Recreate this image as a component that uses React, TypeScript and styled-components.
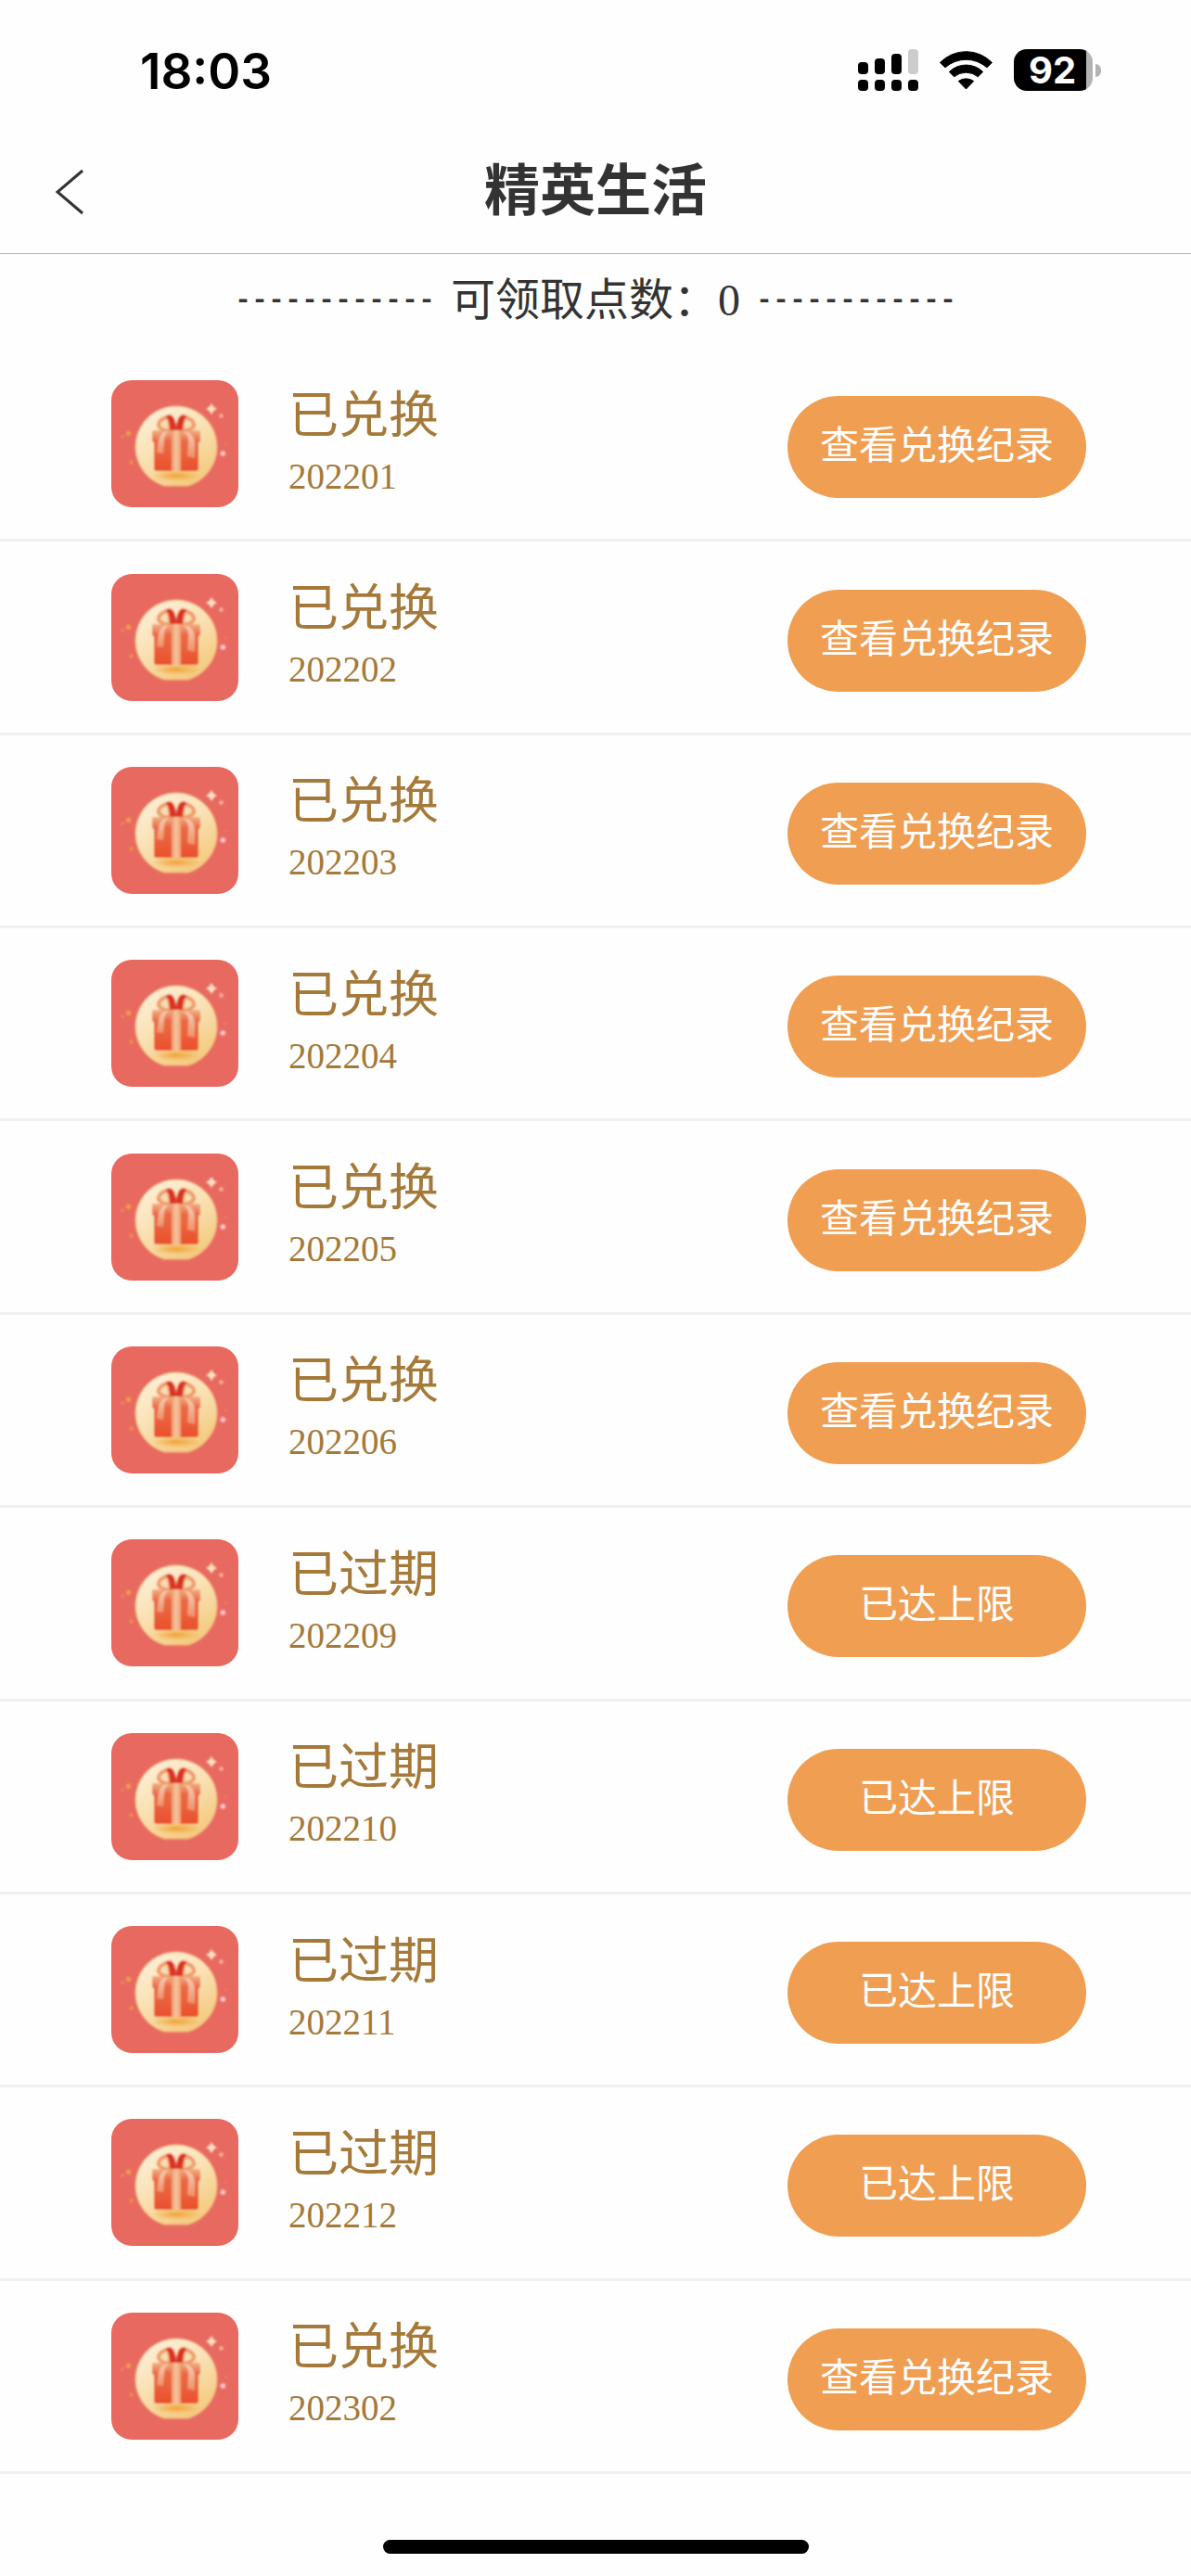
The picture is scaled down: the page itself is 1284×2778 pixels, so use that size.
import React from "react";
import styled, { createGlobalStyle } from "styled-components";

const GlobalStyle = createGlobalStyle`
  *, *::before, *::after { box-sizing: border-box; }
  body {
    margin: 0;
    background: #fefefe;
    color: #333;
    font-family: "Liberation Serif", "Noto Sans CJK SC", serif;
  }
  button { border: 0; padding: 0; font: inherit; cursor: pointer; }
`;

const Page = styled.div`
  display: flex;
  flex-direction: column;
  min-height: 100vh;
`;

const StatusBar = styled.div`
  display: flex;
  align-items: center;
  justify-content: space-between;
  height: 133px;
  padding: 18px 97px 0 151px;
  color: #000;
  font-family: Inter, "Liberation Sans", sans-serif;
`;

const Clock = styled.time`
  padding-top: 2px;
  font-size: 53px;
  font-weight: 600;
  line-height: 60px;
`;

const StatusIcons = styled.div`
  display: flex;
  align-items: center;
  gap: 23px;
`;

const Battery = styled.div`
  display: flex;
  align-items: center;
  gap: 3px;
`;

const BatteryBody = styled.div`
  display: flex;
  align-items: center;
  justify-content: center;
  width: 85px;
  height: 45px;
  padding-right: 2px;
  border-radius: 14px;
  background: linear-gradient(to right, #000 78px, #b3b3b3 78px);
  color: #fff;
  font-size: 40px;
  font-weight: 700;
  line-height: 45px;
`;

const BatteryTip = styled.div`
  width: 6px;
  height: 14px;
  border-radius: 0 6px 6px 0;
  background: #b3b3b3;
`;

const Header = styled.header`
  display: grid;
  grid-template-columns: 120px 1fr 120px;
  align-items: center;
  height: 141px;
  border-bottom: 1px solid #b2b2b2;
`;

const BackButton = styled.button`
  display: flex;
  align-items: center;
  height: 100%;
  padding: 8px 0 0 59px;
  background: none;
  color: #333;
`;

const Title = styled.h1`
  margin: 0;
  padding-bottom: 4px;
  font-family: "Noto Sans CJK SC", sans-serif;
  font-size: 60px;
  font-weight: 700;
  line-height: 80px;
  text-align: center;
`;

const Points = styled.p`
  display: flex;
  align-items: center;
  justify-content: center;
  gap: 17px;
  height: 102px;
  margin: 0;
  padding-bottom: 3px;
  font-size: 48px;
  line-height: 70px;
`;

const Dashes = styled.span`
  font-family: "Liberation Mono", monospace;
  font-size: 30px;
  font-weight: 700;
`;

const List = styled.ul`
  display: grid;
  grid-auto-rows: 1fr;
  flex: 1;
  margin: 0;
  padding: 0;
  list-style: none;
`;

const Row = styled.li`
  display: flex;
  align-items: center;
  min-height: 180px;
  padding: 0 113px 0 120px;
  border-bottom: 3px solid #f0f0f0;
`;

const Info = styled.div`
  flex: 1;
  margin-left: 54px;
  padding-bottom: 8px;
  color: #a57939;
`;

const State = styled.div`
  font-family: "Noto Sans CJK SC", sans-serif;
  font-size: 54px;
  line-height: 78px;
`;

const Period = styled.div`
  font-size: 39px;
  line-height: 62px;
`;

const Action = styled.button`
  width: 322px;
  height: 110px;
  margin-top: 7px;
  border-radius: 55px;
  background: #ef9e52;
  color: #fff;
  && {
    padding-bottom: 10px;
    font-family: "Noto Sans CJK SC", sans-serif;
    font-size: 42px;
    font-weight: 400;
    line-height: 60px;
  }
`;

const Footer = styled.footer`
  display: flex;
  align-items: flex-end;
  justify-content: center;
  height: 110px;
  padding-bottom: 24px;
`;

const HomeIndicator = styled.div`
  width: 459px;
  height: 15px;
  border-radius: 8px;
  background: #000;
`;

const SignalIcon = () => (
  <svg width="65" height="45" viewBox="0 0 65 45" aria-hidden="true">
    <rect x="0" y="14" width="11" height="13" rx="4" />
    <rect x="18" y="10" width="11" height="17" rx="4" />
    <rect x="36" y="5" width="11" height="22" rx="4" />
    <rect x="54" y="0" width="11" height="27" rx="4" fill="#ccc" />
    {[0, 18, 36, 54].map((x) => (
      <rect key={x} x={x} y="33" width="11" height="12" rx="4" />
    ))}
  </svg>
);

const WifiIcon = () => (
  <svg width="57" height="42" viewBox="0 0 57 42" aria-hidden="true">
    <g stroke="#000" strokeWidth="1" strokeLinejoin="round">
      <path d="M.5 12.5A39 39 0 0 1 56.5 12.5L51 17.8A34 34 0 0 0 6 17.8Z" />
      <path d="M10.3 22.5A26 26 0 0 1 46.7 22.5L41.3 27.8A20 20 0 0 0 15.7 27.8Z" />
      <path d="M20.3 32.5A14 14 0 0 1 36.7 32.5L28.5 41Z" />
    </g>
  </svg>
);

const BackIcon = () => (
  <svg width="32" height="50" viewBox="0 0 32 50" fill="none" aria-hidden="true">
    <path d="M30 2L3 25L30 48" stroke="#333" strokeWidth="3" />
  </svg>
);

const GiftIcon = () => (
  <svg width="137" height="137" viewBox="0 0 137 137" aria-hidden="true">
    <defs>
      <linearGradient id="coin" x1="0.2" y1="0" x2="0.8" y2="1">
        <stop offset="0" stopColor="#fdf0d9" />
        <stop offset="0.5" stopColor="#f9dfaf" />
        <stop offset="1" stopColor="#f3c777" />
      </linearGradient>
      <linearGradient id="box" x1="0" y1="0" x2="0" y2="1">
        <stop offset="0" stopColor="#ea6a46" />
        <stop offset="0.4" stopColor="#e9653f" />
        <stop offset="1" stopColor="#ea4f2b" />
      </linearGradient>
      <linearGradient id="lid" x1="0" y1="0" x2="0" y2="1">
        <stop offset="0" stopColor="#f3b184" />
        <stop offset="1" stopColor="#e8623f" />
      </linearGradient>
      <linearGradient id="band" x1="0" y1="0" x2="1" y2="0">
        <stop offset="0" stopColor="#ee9a72" />
        <stop offset="0.5" stopColor="#f6c69d" />
        <stop offset="1" stopColor="#ee9a72" />
      </linearGradient>
      <linearGradient id="tail" x1="0" y1="0" x2="0" y2="1">
        <stop offset="0" stopColor="#f8cdb4" />
        <stop offset="1" stopColor="#ef9068" />
      </linearGradient>
      <radialGradient id="glow">
        <stop offset="0" stopColor="#f1a235" />
        <stop offset="1" stopColor="#f1a235" stopOpacity="0" />
      </radialGradient>
      <filter id="soft" x="-10%" y="-10%" width="120%" height="120%">
        <feGaussianBlur stdDeviation="0.8" />
      </filter>
    </defs>
    <rect width="137" height="137" rx="22" fill="#e8695f" />
    <g filter="url(#soft)">
      <path d="M57 114A44 44 0 1 1 83 114Z" fill="url(#coin)" stroke="#f3b77b" strokeWidth="1" />
      <ellipse cx="70" cy="103" rx="26" ry="6" fill="url(#glow)" />
      <rect x="46" y="60" width="48" height="38" rx="3" fill="url(#box)" />
      <rect x="44" y="54" width="52" height="13" rx="2" fill="url(#lid)" />
      <rect x="65" y="54" width="10" height="44" fill="url(#band)" />
      <path d="M64 54C56 55 50 51 51 47C52 43 57 40 62 40Z" fill="#f8dcb2" stroke="#ee9c6c" strokeWidth="4" />
      <path d="M76 54C84 55 90 51 89 47C88 43 83 40 78 40Z" fill="#f8dcb2" stroke="#ee9c6c" strokeWidth="4" />
      <path d="M60 39C66 36 69 44 69 53H64C64 47 63 42 60 39Z" fill="#dc3024" stroke="#dc3024" strokeWidth="2" />
      <path d="M80 39C74 36 71 44 71 53H76C76 47 77 42 80 39Z" fill="#dc3024" stroke="#dc3024" strokeWidth="2" />
      <path d="M62 55C56 55 52 59 51 65L49 78L56 79L57 65C57 60 59 57 62 55Z" fill="url(#tail)" />
      <path d="M78 55C85 56 90 61 90 68V84L82 82L83 70C84 63 82 58 78 55Z" fill="url(#tail)" />
      <path d="M108 25L110.5 29L114 31L110.5 33L108 37L105.5 33L102 31L105.5 29Z" fill="#fde4c4" />
      <circle cx="118.500" cy="38.500" r="2.200" fill="#f7b7a0" />
      <circle cx="120.300" cy="79" r="2.800" fill="#f8cbd3" />
      <circle cx="18.500" cy="57.300" r="2.800" fill="#ef9a4e" />
      <circle cx="12" cy="61" r="1.500" fill="#ee8e83" />
      <circle cx="21.500" cy="88.500" r="2.200" fill="#ee904c" />
      <circle cx="123.500" cy="69" r="1.300" fill="#ec8468" />
    </g>
  </svg>
);

interface Reward {
  period: string;
  redeemed: boolean;
}

const rewards: Reward[] = [
  { period: "202201", redeemed: true },
  { period: "202202", redeemed: true },
  { period: "202203", redeemed: true },
  { period: "202204", redeemed: true },
  { period: "202205", redeemed: true },
  { period: "202206", redeemed: true },
  { period: "202209", redeemed: false },
  { period: "202210", redeemed: false },
  { period: "202211", redeemed: false },
  { period: "202212", redeemed: false },
  { period: "202302", redeemed: true },
];

const RewardRow = ({ period, redeemed }: Reward) => (
  <Row>
    <GiftIcon />
    <Info>
      <State>{redeemed ? "已兑换" : "已过期"}</State>
      <Period>{period}</Period>
    </Info>
    <Action type="button">{redeemed ? "查看兑换纪录" : "已达上限"}</Action>
  </Row>
);

export default function App() {
  return (
    <>
      <GlobalStyle />
      <Page lang="zh-CN">
        <StatusBar>
          <Clock>18:03</Clock>
          <StatusIcons>
            <SignalIcon />
            <WifiIcon />
            <Battery>
              <BatteryBody>92</BatteryBody>
              <BatteryTip />
            </Battery>
          </StatusIcons>
        </StatusBar>
        <Header>
          <BackButton type="button" aria-label="返回">
            <BackIcon />
          </BackButton>
          <Title>精英生活</Title>
        </Header>
        <Points>
          <Dashes>------------</Dashes>
          <span>可领取点数：0</span>
          <Dashes>------------</Dashes>
        </Points>
        <List>
          {rewards.map((reward) => (
            <RewardRow key={reward.period} {...reward} />
          ))}
        </List>
        <Footer>
          <HomeIndicator />
        </Footer>
      </Page>
    </>
  );
}
